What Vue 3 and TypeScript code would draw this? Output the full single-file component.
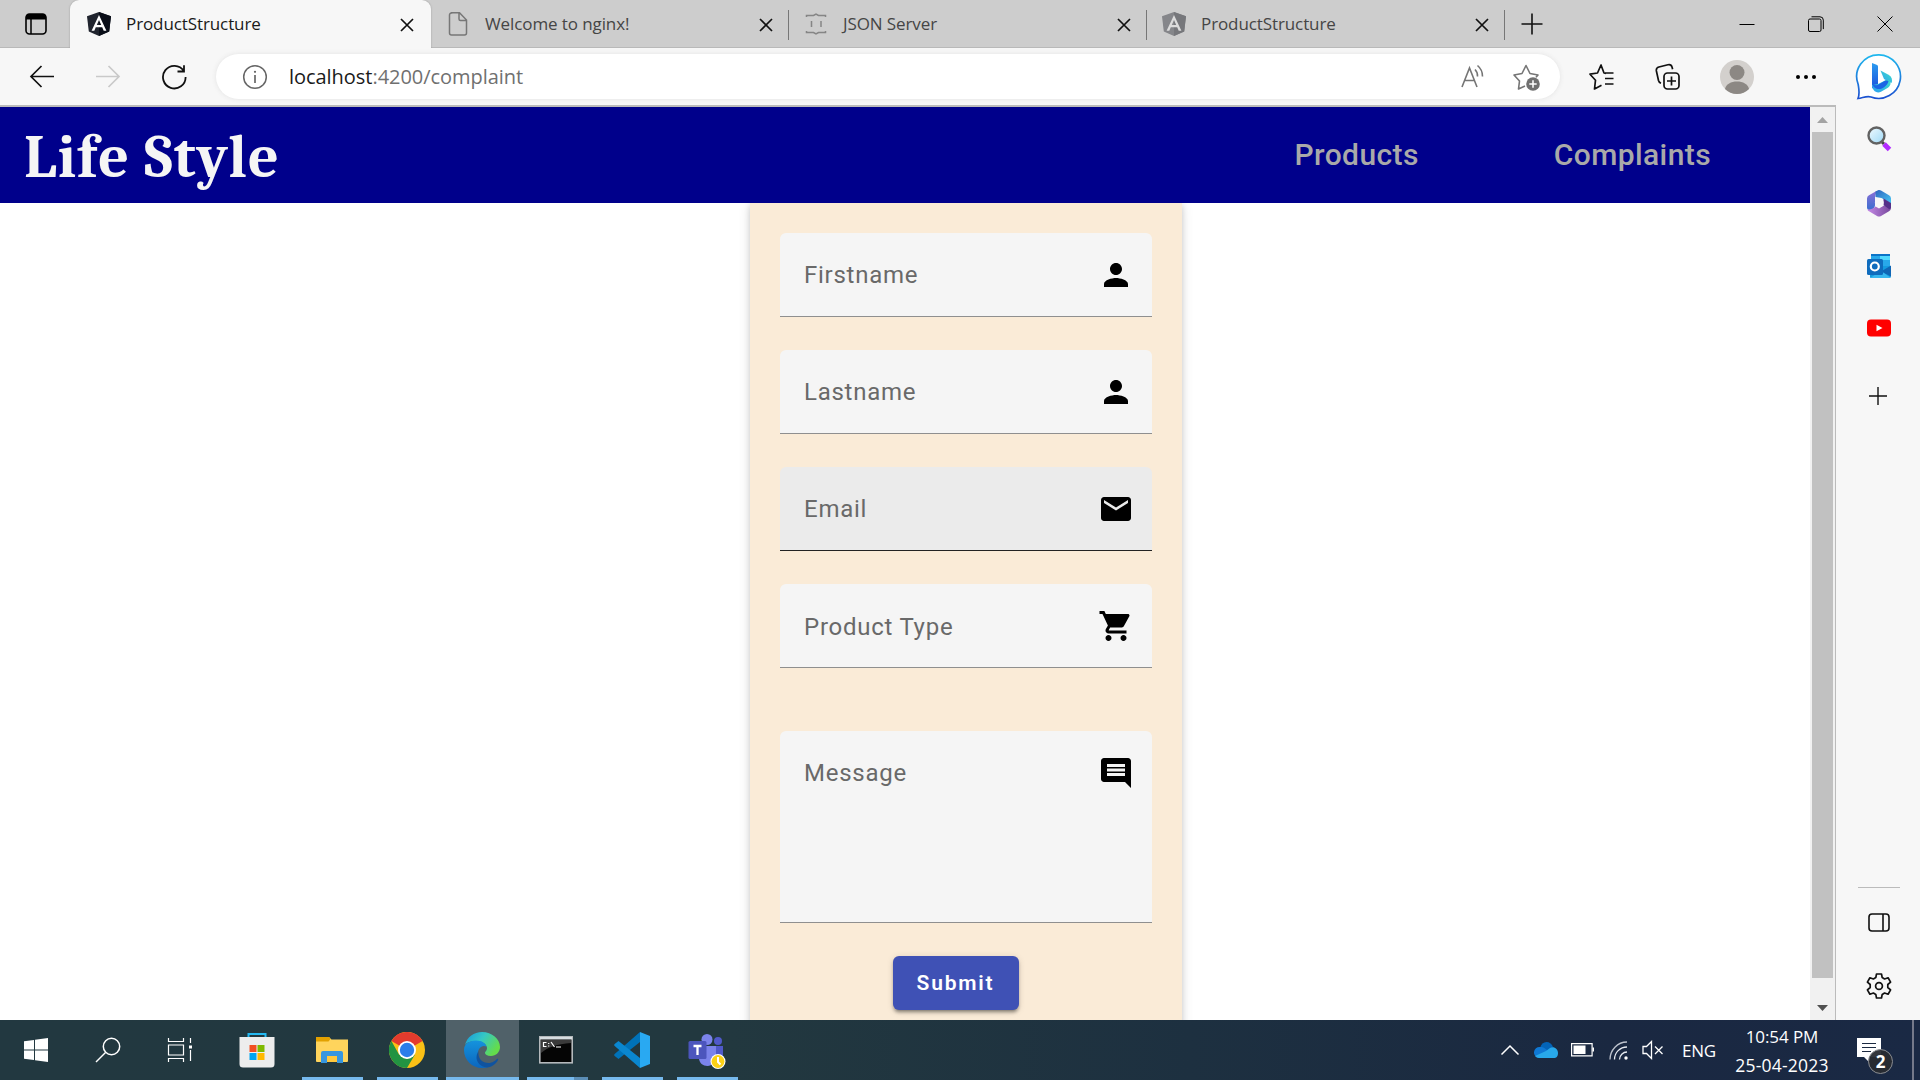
<script setup lang="ts">
interface Tab {
  title: string
  icon: 'angular' | 'page' | 'json'
  active: boolean
}

interface Field {
  label: string
  icon: string
  kind: 'input' | 'select' | 'textarea'
  hovered: boolean
}

const tabs: Tab[] = [
  { title: 'ProductStructure', icon: 'angular', active: true },
  { title: 'Welcome to nginx!', icon: 'page', active: false },
  { title: 'JSON Server', icon: 'json', active: false },
  { title: 'ProductStructure', icon: 'angular', active: false },
]

const person =
  'M12 12c2.21 0 4-1.79 4-4s-1.79-4-4-4-4 1.79-4 4 1.79 4 4 4zm0 2c-2.67 0-8 1.34-8 4v2h16v-2c0-2.66-5.33-4-8-4z'

const fields: Field[] = [
  { label: 'Firstname', icon: person, kind: 'input', hovered: false },
  { label: 'Lastname', icon: person, kind: 'input', hovered: false },
  {
    label: 'Email',
    icon: 'M20 4H4c-1.1 0-1.99.9-1.99 2L2 18c0 1.1.9 2 2 2h16c1.1 0 2-.9 2-2V6c0-1.1-.9-2-2-2zm0 4l-8 5-8-5V6l8 5 8-5v2z',
    kind: 'input',
    hovered: true,
  },
  {
    label: 'Product Type',
    icon: 'M7 18c-1.1 0-1.99.9-1.99 2S5.9 22 7 22s2-.9 2-2-.9-2-2-2zM1 2v2h2l3.6 7.59-1.35 2.45c-.16.28-.25.61-.25.96 0 1.1.9 2 2 2h12v-2H7.42c-.14 0-.25-.11-.25-.25l.03-.12.9-1.63h7.45c.75 0 1.41-.41 1.75-1.03l3.58-6.49c.08-.14.12-.31.12-.48 0-.55-.45-1-1-1H5.21l-.94-2H1zm16 16c-1.1 0-1.99.9-1.99 2s.89 2 1.99 2 2-.9 2-2-.9-2-2-2z',
    kind: 'select',
    hovered: false,
  },
  {
    label: 'Message',
    icon: 'M21.99 4c0-1.1-.89-2-1.99-2H4c-1.1 0-2 .9-2 2v12c0 1.1.9 2 2 2h14l4 4-.01-18zM18 14H6v-2h12v2zm0-3H6V9h12v2zm0-3H6V6h12v2z',
    kind: 'textarea',
    hovered: false,
  },
]
</script>

<template>
  <div class="screen">
    <!-- Tab strip -->
    <header class="tabstrip">
      <div class="tab-actions">
        <svg width="22" height="22" viewBox="0 0 22 22">
          <rect x="1" y="1" width="20" height="20" rx="3.5" fill="none" stroke="#000" stroke-width="1.6" />
          <path d="M1 6.5V4a3 3 0 0 1 3-3h14a3 3 0 0 1 3 3v2.5z" />
          <path d="M6 6v15" stroke="#000" stroke-width="1.5" />
        </svg>
      </div>
      <div v-for="(tab, i) in tabs" :key="i" class="tab" :class="{ active: tab.active, divided: i > 0 }">
        <svg v-if="tab.icon === 'angular'" class="favicon" viewBox="0 0 24 24">
          <path d="M12 0 24 4.2 22.2 19.5 12 24 1.8 19.5 0 4.2z" :fill="tab.active ? '#20242e' : '#85868a'" />
          <path d="M12 0 24 4.2 22.2 19.5 12 24z" :fill="tab.active ? '#0a0e18' : '#76777b'" />
          <path d="M12 3 4.6 18.8h2.7l1.500-3.600h6.400l1.500 3.600h2.700zm0 5 2.200 5H9.800z" :fill="tab.active ? '#fff' : '#dcdcdc'" />
        </svg>
        <svg v-else-if="tab.icon === 'page'" class="favicon" viewBox="0 0 24 24" fill="none" stroke="#777" stroke-width="1.5">
          <path d="M5.500.8h8L20.500 8v13a2 2 0 0 1-2 2h-13a2 2 0 0 1-2-2V3a2 2 0 0 1 2-2zM13 1v6a1.500 1.500 0 0 0 1.500 1.500h6" />
        </svg>
        <svg v-else class="favicon" viewBox="0 0 24 24" fill="none" stroke="#858585" stroke-width="1.5">
          <path d="M2.500 5V3.500h7l2.500-1.500 2.500 1.500h7V5M2.500 19v1.500h7l2.500 1.500 2.500-1.500h7V19M7.500 9v6M17 9v6" />
        </svg>
        <span class="tab-title">{{ tab.title }}</span>
        <svg class="tab-close" width="14" height="14" viewBox="0 0 14 14">
          <path d="M1 1l12 12M13 1L1 13" stroke="#111" stroke-width="1.7" />
        </svg>
      </div>
      <div class="new-tab">
        <svg width="22" height="22" viewBox="0 0 22 22"><path d="M11 .5v21M.5 11h21" stroke="#111" stroke-width="1.6" /></svg>
      </div>
      <div class="window-controls">
        <svg width="16" height="16" viewBox="0 0 16 16"><path d="M.5 8.500h15" stroke="#000" /></svg>
        <svg width="16" height="16" viewBox="0 0 16 16" fill="none" stroke="#000">
          <rect x=".5" y="3" width="12.5" height="12.5" rx="1.5" />
          <path d="M3.500.8h8.500a3.300 3.300 0 0 1 3.300 3.300v9" />
        </svg>
        <svg width="16" height="16" viewBox="0 0 16 16"><path d="M.5.500l15 15M15.500.500l-15 15" stroke="#000" /></svg>
      </div>
    </header>

    <div class="browser">
      <div class="main-column">
        <!-- Toolbar -->
        <div class="toolbar">
          <div class="nav-buttons">
            <svg width="26" height="26" viewBox="0 0 26 26" fill="none" stroke="#111" stroke-width="1.7"><path d="M25 12.500H2M12.500 2 2 12.500 12.500 23" /></svg>
            <svg width="26" height="26" viewBox="0 0 26 26" fill="none" stroke="#c9c9c9" stroke-width="1.7"><path d="M1 12.500h23M13.500 2 24 12.500 13.500 23" /></svg>
            <svg width="26" height="26" viewBox="0 0 26 26" fill="none" stroke="#111" stroke-width="1.8">
              <path d="M22.800 7A11.300 11.300 0 1 0 24.600 13M23 1.200V7.500h-6.500" />
            </svg>
          </div>
          <div class="address">
            <svg width="26" height="26" viewBox="0 0 26 26" fill="none" stroke="#666" stroke-width="1.5">
              <circle cx="13" cy="13" r="11.3" /><path d="M13 11v8" stroke-width="1.7" /><circle cx="13" cy="7.8" r="1.1" fill="#666" stroke="none" />
            </svg>
            <span class="url"><span class="host">localhost</span>:4200/complaint</span>
            <svg class="read-aloud" width="26" height="26" viewBox="0 0 26 26" fill="none" stroke="#757575" stroke-width="1.6">
              <path d="M2 23 9.500 4 17 23M4.600 16.500h9.800M15 5.500a9 9 0 0 1 2.500 7M17.500 1.500a14 14 0 0 1 5 11" />
            </svg>
            <svg width="28" height="28" viewBox="0 0 28 28">
              <path d="M12 23 5.500 26l1-8-5.500-6 8-1.500L13 2.500l4 8 8 1.500-2 2.300" fill="none" stroke="#757575" stroke-width="1.6" stroke-linejoin="round" />
              <circle cx="20" cy="21" r="6.8" fill="#707070" /><path d="M20 17.300v7.400M16.300 21h7.400" stroke="#fff" stroke-width="1.5" />
            </svg>
          </div>
          <div class="toolbar-actions">
            <svg width="28" height="28" viewBox="0 0 28 28" fill="none" stroke="#111" stroke-width="1.7" stroke-linejoin="round">
              <path d="M18 10.300l-2-.3L13 2 9.500 10 2 11.200l5.500 6L6.500 26l7-3.700M17 10h8.500M17 15.500h8.500M17 21h8.500" />
            </svg>
            <svg width="28" height="28" viewBox="0 0 28 28" fill="none" stroke="#111" stroke-width="1.7">
              <rect x="10" y="10" width="15" height="16" rx="3.5" /><path d="M17.500 13.500v9M13 18h9M7 20.300a4 4 0 0 1-2.500-2.800L2.400 8a3.500 3.500 0 0 1 2.500-4l9-2.300a3.500 3.500 0 0 1 4.200 2.500l.5 2" />
            </svg>
            <svg width="34" height="34" viewBox="0 0 34 34">
              <circle cx="17" cy="17" r="17" fill="#d3d0cd" /><circle cx="17" cy="12.5" r="7.5" fill="#8c8884" /><path d="M5 29c1-5 6-7.500 12-7.500S28 24 29 29a17 17 0 0 1-24 0z" fill="#8c8884" />
            </svg>
            <svg width="28" height="28" viewBox="0 0 28 28"><circle cx="6" cy="14" r="2" /><circle cx="14" cy="14" r="2" /><circle cx="22" cy="14" r="2" /></svg>
          </div>
        </div>

        <!-- Web page -->
        <div class="viewport">
          <div class="page">
            <nav class="site-header">
              <span class="brand">Life Style</span>
              <a class="link products">Products</a>
              <a class="link">Complaints</a>
            </nav>
            <form class="card">
              <div v-for="field in fields" :key="field.label" class="field" :class="[field.kind, { hovered: field.hovered }]">
                <label>{{ field.label }}</label>
                <svg width="36" height="36" viewBox="0 0 24 24"><path :d="field.icon" /></svg>
              </div>
              <button type="button" class="submit">Submit</button>
            </form>
          </div>
          <div class="scrollbar">
            <svg width="25" height="25" viewBox="0 0 25 25"><path d="M7 16l5.500-6 5.500 6z" fill="#a3a3a3" /></svg>
            <div class="thumb"></div>
            <svg width="25" height="42" viewBox="0 0 25 42"><path d="M7 27l5.500 6 5.500-6z" fill="#505050" /></svg>
          </div>
        </div>
      </div>

      <!-- Edge sidebar -->
      <aside class="sidebar">
        <svg class="bing" width="50" height="50" viewBox="0 0 50 50">
          <defs>
            <linearGradient id="ring" x1="0" y1="0" x2="0" y2="1"><stop offset="0" stop-color="#20b8ee" /><stop offset="1" stop-color="#1b50d0" /></linearGradient>
            <linearGradient id="bee" x1="0" y1="0" x2="0" y2="1"><stop offset="0" stop-color="#2b9cf0" /><stop offset="1" stop-color="#1b50dc" /></linearGradient>
            <linearGradient id="bee2" x1="1" y1="0" x2="0" y2="1"><stop offset="0" stop-color="#40e0c8" /><stop offset="1" stop-color="#289df2" /></linearGradient>
          </defs>
          <path d="M25 2.800a21.800 21.800 0 1 1-8 42.200c-4-1.500-8 .8-13 1.500 2-5 1-9 .2-14A21.800 21.800 0 0 1 25 2.800z" fill="#fff" stroke="url(#ring)" stroke-width="1.7" />
          <path d="M18 11l4.500 1.800c1 .4 1.500 1 1.500 2V32l-5.500 4.500Q18 36 18 34z" fill="url(#bee)" />
          <path d="M26.500 18.500l8 4.200a7 7 0 0 1 3 8.300l-2.500-1-5-3z" fill="url(#bee2)" />
          <path d="M18 33l6-1 7-3.500c3-1.500 6 .5 5.500 3.500-.3 1.500-1.500 3-3 4l-6.500 3.700c-4.500 2.500-9-1.700-9-6.700z" fill="url(#bee2)" />
          <path d="M18 30c1 3 4 4 6.500 2.500l6-3.500c2-1 4 0 4 0-1 5-6.500 8.500-10.500 8-3.600-.3-6-3.500-6-7z" fill="#1c65e4" />
        </svg>
        <svg width="28" height="28" viewBox="0 0 28 28">
          <defs><linearGradient id="glass" x1="0" y1="0" x2="1" y2="1"><stop offset="0" stop-color="#f2faff" /><stop offset="1" stop-color="#9bd8f6" /></linearGradient></defs>
          <path d="M17 17l2 2" stroke="#444" stroke-width="3" /><path d="M19 19l5.500 5.500" stroke="#b22cff" stroke-width="5" />
          <circle cx="11.5" cy="10.5" r="8" fill="url(#glass)" stroke="#626262" stroke-width="2.4" />
        </svg>
        <svg width="26" height="28" viewBox="0 0 26 28">
          <defs>
            <linearGradient id="m1" x1="0" y1="0" x2="0" y2="1"><stop offset="0" stop-color="#8a6fd6" /><stop offset="1" stop-color="#3a6fd0" /></linearGradient>
            <linearGradient id="m2" x1="0" y1="0" x2="1" y2="0"><stop offset="0" stop-color="#c48ae6" /><stop offset="1" stop-color="#76479b" /></linearGradient>
            <linearGradient id="m3" x1="0" y1="0" x2="1" y2="1"><stop offset="0" stop-color="#2f62bd" /><stop offset="1" stop-color="#45c8f5" /></linearGradient>
          </defs>
          <path d="M10.500 2 3 6.200A4 4 0 0 0 1 9.500v9c0 1.500 1 2.500 2 2.500 3 0 6-2 6-5V8z" fill="url(#m1)" />
          <path d="M9.500 8V2.500L12 1.200c1-.5 2-.4 3 .2l8 4.800a4 4 0 0 1 2 3.300v5L15.500 9z" fill="url(#m3)" />
          <path d="M1.500 20.500C5 21 8 19 9.500 17.500L13 19.500l5-3 7-1v3.500a4 4 0 0 1-2 3.300l-8 4.600c-1.300.7-2.700.7-4 0l-8-4.600c-.8-.5-1.500-1.200-1.500-1.800z" fill="url(#m2)" />
          <path d="M17.500 9.500 25 14v4c0 1.500-1 2-2 2l-5.500-4z" fill="#553088" />
          <circle cx="13.300" cy="13.800" r="4.400" fill="#f7f7f7" />
        </svg>
        <svg width="26" height="26" viewBox="0 0 26 26">
          <path d="M5 1h19v13H5z" fill="#28a8ea" /><path d="M14 1h10v6H14z" fill="#50d9ff" /><path d="M5 1h19v2H5z" fill="#0b74c8" />
          <path d="M4 13h21v10a2 2 0 0 1-2 2H5a1 1 0 0 1-1-1z" fill="#159bdf" /><path d="M25 12.500v11l-10-5z" fill="#1066b5" /><path d="M4 25l11-7 10 7z" fill="#38b7ef" />
          <rect x="1" y="6" width="16" height="16" rx="1.5" fill="#0f6cbd" /><circle cx="8.8" cy="13.5" r="4" fill="none" stroke="#fff" stroke-width="2.2" />
        </svg>
        <svg width="26" height="26" viewBox="0 0 26 26"><rect x="1" y="4.5" width="24" height="17" rx="4" fill="#f00" /><path d="M10.500 9.800v6.400l6-3.200z" fill="#fff" /></svg>
        <svg class="add" width="20" height="20" viewBox="0 0 20 20"><path d="M10 1v18M1 10h18" stroke="#111" stroke-width="1.4" /></svg>
        <div class="spacer"></div>
        <div class="rule"></div>
        <svg class="panel" width="24" height="22" viewBox="0 0 24 22" fill="none" stroke="#111" stroke-width="1.6"><rect x="2" y="2" width="20" height="17" rx="3" /><path d="M16 2v17" /></svg>
        <svg width="28" height="28" viewBox="0 0 28 28" fill="none" stroke="#111" stroke-width="1.7" stroke-linejoin="round">
          <circle cx="14" cy="14" r="3.4" />
          <path d="M11.500 2h5l.7 3.600 2.400 1.400 3.500-1.200 2.500 4.300-2.800 2.400v3l2.800 2.400-2.500 4.300-3.500-1.200-2.400 1.400-.7 3.600h-5l-.7-3.600L8.400 21l-3.500 1.200-2.500-4.300 2.800-2.400v-3l-2.800-2.400 2.500-4.300L8.400 7l2.400-1.400z" />
        </svg>
      </aside>
    </div>

    <!-- Windows taskbar -->
    <footer class="taskbar">
      <div class="sys">
        <svg width="24" height="24" viewBox="0 0 24 24" fill="#fff"><path d="M0 3.300 10 2v9.500H0zM11 1.800 24 0v11.500H11zM0 12.500h10V22L0 20.800zM11 12.500h13V24l-13-1.800z" /></svg>
      </div>
      <div class="sys">
        <svg width="26" height="26" viewBox="0 0 26 26" fill="none" stroke="#fff" stroke-width="1.5"><circle cx="16.5" cy="9.5" r="8.2" /><path d="M10.500 15.500 1 25" /></svg>
      </div>
      <div class="sys view">
        <svg width="26" height="24" viewBox="0 0 26 24" fill="none" stroke="#fff" stroke-width="1.2"><path d="M1.500 0v3.500h15V0M1.500 24v-3.500h15V24M1.500 7h15v10h-15zM23.500 0v5M23.500 12v11" /><path d="M22 7.500h3v3h-3z" fill="#fff" stroke="none" /></svg>
      </div>
      <div class="app">
        <svg width="36" height="36" viewBox="0 0 36 36">
          <path d="M9.500 7V2h17v5" fill="none" stroke="#24b9f2" stroke-width="2" /><path d="M.5 5h35v27a3.500 3.500 0 0 1-3.500 3.500H4A3.500 3.500 0 0 1 .5 32z" fill="#ededed" />
          <path d="M10.500 13h7v7h-7z" fill="#f25022" /><path d="M18.500 13h7v7h-7z" fill="#7fba00" /><path d="M10.500 21h7v7h-7z" fill="#00a4ef" /><path d="M18.500 21h7v7h-7z" fill="#ffb900" />
        </svg>
      </div>
      <div class="app running">
        <svg width="32" height="28" viewBox="0 0 32 28">
          <path d="M0 2a1 1 0 0 1 1-1h12l2.500 2.500H32V25a1 1 0 0 1-1 1H1a1 1 0 0 1-1-1z" fill="#ffd45c" /><path d="M0 1h13l1.500 2-2 2.500H0z" fill="#e2a100" /><path d="M10 19h12v7H10z" fill="#ffc83d" />
          <path d="M5 27V17a2 2 0 0 1 2-2h18a2 2 0 0 1 2 2v10h-6v-7H11v7z" fill="#3696e0" />
        </svg>
      </div>
      <div class="app running">
        <svg width="36" height="36" viewBox="0 0 36 36">
          <circle cx="18" cy="18" r="18" fill="#fbc116" /><path d="M18 18 2.400 9A18 18 0 0 1 33.600 9z" fill="#e33b2e" /><path d="M2.400 9A18 18 0 0 0 18 36l8-13.500-8 4.500-8-4.500z" fill="#229342" />
          <circle cx="18" cy="18" r="9" fill="#fff" /><circle cx="18" cy="18" r="7.2" fill="#2b7de9" />
        </svg>
      </div>
      <div class="app running focused">
        <svg width="36" height="36" viewBox="0 0 36 36">
          <defs>
            <linearGradient id="wave" x1="0" y1="0" x2="1" y2=".5"><stop offset="0" stop-color="#1597dd" /><stop offset=".5" stop-color="#35c8c5" /><stop offset="1" stop-color="#64dc4b" /></linearGradient>
            <linearGradient id="sea" x1="0" y1="0" x2="0" y2="1"><stop offset="0" stop-color="#1593dd" /><stop offset="1" stop-color="#0c66bd" /></linearGradient>
          </defs>
          <path d="M1 13C3 5 10 0 18 0c10 0 18 7 18 15 0 5-4 9-9 9-4 0-6-1.500-6-3s2-2 2-5-4-7-10-7C7 9 3 10 1 13z" fill="url(#wave)" />
          <path d="M0 18C0 12 5 8.500 12 8.500c6 0 10 3 10.500 6-5-2-9 2-8.500 8 .5 6 5 11 10 12.500-2 .8-4 1-6 1C8 36 0 28 0 18z" fill="url(#sea)" />
          <path d="M14.500 19c-1 8 4 12 10 12 4 0 7-2.500 8.500-4 1-.5 1.500 0 1 1C32 32 28 35 23 35.500 16 35 9 28 14.500 19z" fill="#10539f" />
        </svg>
      </div>
      <div class="app running stacked">
        <svg width="34" height="28" viewBox="0 0 34 28">
          <rect x=".8" y=".8" width="32.4" height="26" fill="#050505" stroke="#b5b9bc" stroke-width="1.6" /><path d="M1 1h32v2.500H1z" fill="#d7dde1" /><path d="M2 4h30v3C18 8 9 11 2 17z" fill="#3a3a3a" />
          <path d="M7.500 6.500H4.500v4h3M9.700 7v1M9.700 9.500v1M12 6l3.500 5M17 11h5" fill="none" stroke="#fff" stroke-width="1.2" />
        </svg>
      </div>
      <div class="app running">
        <svg width="36" height="36" viewBox="0 0 36 36">
          <path d="M26 0v10L4.500 27 .7 24c-.7-.6-.7-1.400 0-2z" fill="#0072b8" /><path d="M26 36V26L4.500 9 .7 12c-.7.6-.7 1.400 0 2z" fill="#0a87d0" /><path d="M26 0l10 4v28l-10 4z" fill="#29a9f2" />
        </svg>
      </div>
      <div class="app running teams">
        <svg width="38" height="36" viewBox="0 0 38 36">
          <circle cx="19" cy="6.5" r="5.5" fill="#7b83eb" /><circle cx="30" cy="8" r="4" fill="#5059c9" /><path d="M25 13h10v9c0 5-4 8-9 8z" fill="#5059c9" /><path d="M12 13h16v12c0 4-4 8-8.500 8S11 30 11 25z" fill="#7b83eb" />
          <rect x=".5" y="8" width="18" height="18" rx="1.5" fill="#4c55bd" /><path d="M5.500 13h8M9.500 13v9" stroke="#fff" stroke-width="2.3" />
          <circle cx="30" cy="28.5" r="7.5" fill="#fff" /><circle cx="30" cy="28.5" r="6.4" fill="#fcd116" /><path d="M30 24v5l2.500 2.500" fill="none" stroke="#fff" stroke-width="2" />
        </svg>
      </div>
      <div class="tray">
        <svg class="chev" width="20" height="12" viewBox="0 0 20 12"><path d="M1.500 10.500 10 2l8.500 8.500" fill="none" stroke="#fff" stroke-width="1.5" /></svg>
        <svg class="cloud" width="24" height="16" viewBox="0 0 24 16">
          <path d="M6 6C7 2 9.500 0 12.500 0S18 2 19 5l-6 5z" fill="#0364b8" /><path d="M5 16a5 5 0 0 1 1-11c3-.5 5 1 7 3l8 7z" fill="#0f78d4" /><path d="M12 9l4-3c4-2 8 1 8 5s-2 5-4 5H5c-1.500 0-3-1-4-2z" fill="#28a8ea" />
        </svg>
        <svg class="batt" width="23" height="14" viewBox="0 0 23 14"><path d="M.6.600h20.500v12.200H.6z" fill="none" stroke="#fff" stroke-width="1.2" /><path d="M2.500 2.500h12v8.500h-12zM21.500 4.500H23v4h-1.500z" fill="#fff" /></svg>
        <svg class="wifi" width="19" height="19" viewBox="0 0 19 19" fill="none" stroke="#e6eaf0" stroke-width="1.3"><path d="M1 18.500C1 9 8.500 1 18 1" opacity=".8" /><path d="M5.500 18.500C5.500 11.500 11 6 18 6M10.500 18.500c0-4 3.500-7.500 7.500-7.500" /><circle cx="17" cy="17" r="1.7" fill="#fff" stroke="none" /></svg>
        <svg class="mute" width="22" height="20" viewBox="0 0 22 20" fill="none" stroke="#fff" stroke-width="1.3"><path d="M1 6.500h3.500L9.500 1.500v17l-5-5H1zM13 6.500l7.500 7.500M20.500 6.500 13 14" /></svg>
        <span class="lang">ENG</span>
        <div class="clock"><span>10:54 PM</span><span class="date">25-04-2023</span></div>
        <div class="notice">
          <svg width="24" height="24" viewBox="0 0 24 24"><path d="M0 0h24v19H12v5l-5-5H0z" fill="#fff" /><path d="M5 5.500h14M5 9.500h14M5 13.500h9" stroke="#1c2a41" stroke-width="1.1" /></svg>
          <span class="badge">2</span>
        </div>
        <div class="peek"></div>
      </div>
    </footer>
  </div>
</template>

<style>
body {
  margin: 0;
  overflow: hidden;
}
</style>

<style scoped>
.screen {
  width: 1920px;
  height: 1080px;
  display: flex;
  flex-direction: column;
  overflow: hidden;
  background: #f7f7f7;
  font-family: 'Segoe UI', 'Open Sans', 'Noto Sans', sans-serif;
}
svg {
  display: block;
  flex: none;
}

/* Tab strip */
.tabstrip {
  height: 48px;
  display: flex;
  background: #cdcdcd;
  box-shadow: inset 0 -1px 0 #b9b9b9;
}
.tab-actions {
  width: 70px;
  display: flex;
  align-items: center;
  padding-left: 25px;
  box-sizing: border-box;
}
.tab {
  width: 358px;
  box-sizing: border-box;
  display: flex;
  align-items: center;
  padding: 0 16px 0 15px;
  color: #454545;
}
.tab.active {
  width: 361px;
  padding: 0 17px;
  color: #1a1a1a;
  background: #f7f7f7;
  border-radius: 9px 9px 0 0;
  box-shadow: 0 0 2px #999;
  clip-path: inset(0 -3px 0 -3px);
}
.tab.divided {
  background: linear-gradient(#777, #777) right 10px / 1px 30px no-repeat;
}
.favicon {
  width: 24px;
  height: 24px;
}
.tab-title {
  margin: -2px 0 0 15px;
  font-size: 17px;
  letter-spacing: -0.1px;
  flex: 1;
  white-space: nowrap;
}
.tab-close {
  margin-top: 2px;
}
.new-tab {
  width: 54px;
  display: flex;
  align-items: center;
  justify-content: center;
}
.window-controls {
  margin-left: auto;
  margin-right: 27px;
  display: flex;
  align-items: center;
  gap: 53px;
}

/* Browser frame */
.browser {
  flex: 1;
  min-height: 0;
  display: flex;
}
.main-column {
  width: 1836px;
  display: flex;
  flex-direction: column;
}
.toolbar {
  height: 57px;
  display: flex;
  align-items: center;
}
.nav-buttons {
  width: 216px;
  box-sizing: border-box;
  padding-left: 29px;
  display: flex;
  gap: 40px;
}
.address {
  width: 1344px;
  height: 45px;
  box-sizing: border-box;
  padding: 0 19px 0 26px;
  border-radius: 23px;
  background: #fff;
  box-shadow: 0 0 5px #e2e2e2;
  display: flex;
  align-items: center;
}
.url {
  margin-left: 21px;
  font-size: 20px;
  letter-spacing: -0.04px;
  color: #707070;
}
.host {
  color: #1a1a1a;
}
.read-aloud {
  margin-left: auto;
  margin-right: 27px;
}
.toolbar-actions {
  flex: 1;
  display: flex;
  align-items: center;
  padding: 0 16px 0 28px;
  justify-content: space-between;
}
.viewport {
  flex: 1;
  min-height: 0;
  box-sizing: border-box;
  border-top: 2px solid #bbb;
  border-right: 1px solid #bbb;
  display: flex;
}
.page {
  width: 1810px;
  background: #fff;
  overflow: hidden;
  display: flex;
  flex-direction: column;
  align-items: center;
}
.scrollbar {
  width: 25px;
  background: #f1f1f1;
  display: flex;
  flex-direction: column;
}
.thumb {
  flex: 1;
  margin: 0 2px;
  background: #c1c1c1;
}

/* Site */
.site-header {
  width: 100%;
  height: 96px;
  flex: none;
  box-sizing: border-box;
  padding: 0 99px 0 24px;
  background: #00008b;
  display: flex;
  align-items: center;
  z-index: 1;
}
.brand {
  font-family: Cambria, Caladea, 'Liberation Serif', serif;
  font-weight: 700;
  font-size: 60px;
  line-height: 70px;
  letter-spacing: 1.05px;
  color: #f5f5f5;
  margin-right: auto;
  padding-top: 6px;
  white-space: nowrap;
}
.link {
  font: 500 30px/40px Roboto, sans-serif;
  letter-spacing: 0.4px;
  color: #a9a9a9;
}
.products {
  margin-right: 135px;
}
.card {
  width: 432px;
  height: 900px;
  flex: none;
  box-sizing: border-box;
  margin-left: 122px;
  padding: 30px;
  background: #faebd7;
  box-shadow: 0 3px 1.5px -1px rgba(0, 0, 0, 0.1), 0 2px 6px rgba(0, 0, 0, 0.14), 0 1.5px 12px rgba(0, 0, 0, 0.12);
  display: flex;
  flex-direction: column;
}
.field {
  height: 84px;
  flex: none;
  box-sizing: border-box;
  margin-bottom: 33px;
  padding: 24px 18px 0 24px;
  border-bottom: 1px solid #8f8f8f;
  border-radius: 6px 6px 0 0;
  background: #f5f5f5;
  display: flex;
  justify-content: space-between;
  align-items: flex-start;
}
.field label {
  font: 400 24px/36px Roboto, sans-serif;
  letter-spacing: 0.75px;
  color: #696969;
}
.field.hovered {
  background: #ebebeb;
  border-color: #222;
}
.field.select {
  margin-bottom: 63px;
}
.field.select label {
  padding-top: 1px;
}
.field.textarea {
  height: 192px;
}
.submit {
  width: 126px;
  height: 54px;
  margin-left: 113px;
  padding: 0 1px 0 0;
  border: 0;
  border-radius: 6px;
  background: #3f51b5;
  color: #fff;
  font: 600 21px/54px Roboto, sans-serif;
  letter-spacing: 1.8px;
  box-shadow: 0 4px 2px -3px rgba(0, 0, 0, 0.2), 0 3px 3px rgba(0, 0, 0, 0.24), 0 1.5px 7px rgba(0, 0, 0, 0.12);
}

/* Sidebar */
.sidebar {
  width: 84px;
  box-sizing: border-box;
  padding-left: 1px;
  display: flex;
  flex-direction: column;
  align-items: center;
}
.sidebar .bing {
  margin: 4px 0 0;
}
.sidebar svg + svg {
  margin-top: 36px;
}
.sidebar .bing + svg {
  margin-top: 23px;
}
.sidebar svg.add {
  margin: 45px 2px 0 0;
}
.spacer {
  flex: 1;
}
.rule {
  width: 42px;
  height: 1px;
  background: #bbb;
  margin-bottom: 24px;
}
.sidebar .panel + svg {
  margin: 38px 0 20px;
}

/* Taskbar */
.taskbar {
  height: 60px;
  display: flex;
  color: #fff;
  background: linear-gradient(90deg, #223840 0%, #22383f 38%, #1d3040 62%, #1a2841 84%, #1a2944 100%);
}
.sys {
  width: 72px;
  display: flex;
  align-items: center;
  justify-content: center;
}
.view {
  margin-right: 3px;
}
.app {
  width: 75px;
  display: flex;
  align-items: center;
  justify-content: center;
}
.running {
  background: linear-gradient(#76b9ed, #76b9ed) 8px bottom / 61px 3px no-repeat;
}
.focused {
  width: 73px;
  margin: 0 0 0 2px;
  padding-right: 2px;
  box-sizing: border-box;
  background: linear-gradient(#76b9ed, #76b9ed) bottom / 100% 3px no-repeat, #506169;
}
.stacked {
  background: linear-gradient(#76b9ed, #76b9ed) 8px bottom / 47px 3px no-repeat, linear-gradient(#5b8db5, #5b8db5) 55px bottom / 14px 3px no-repeat;
}
.stacked svg {
  margin-right: 1px;
}
.teams svg {
  margin-top: 2px;
}
.tray {
  margin-left: auto;
  width: 420px;
  display: flex;
  align-items: center;
}
.cloud {
  margin-left: 14px;
}
.batt {
  margin-left: 13px;
}
.wifi {
  margin-left: 15px;
}
.mute {
  margin-left: 14px;
}
.lang {
  width: 35px;
  margin-left: 18px;
  font-size: 17px;
  letter-spacing: -0.3px;
}
.clock {
  width: 100px;
  margin-left: 15px;
  padding-top: 1px;
  font-size: 17px;
  line-height: 28px;
  letter-spacing: -0.1px;
  display: flex;
  flex-direction: column;
  align-items: center;
}
.date {
  font-size: 17.5px;
  letter-spacing: 0.2px;
}
.notice {
  position: relative;
  margin-left: 25px;
}
.badge {
  position: absolute;
  left: 11px;
  top: 11px;
  width: 23px;
  height: 23px;
  border: 1px solid #8a8d92;
  border-radius: 50%;
  background: rgba(40, 43, 50, 0.95);
  font-size: 17px;
  font-weight: 700;
  line-height: 23px;
  text-align: center;
}
.peek {
  width: 2px;
  height: 60px;
  margin-left: auto;
  margin-right: 6px;
  background: #74798a;
}
</style>
